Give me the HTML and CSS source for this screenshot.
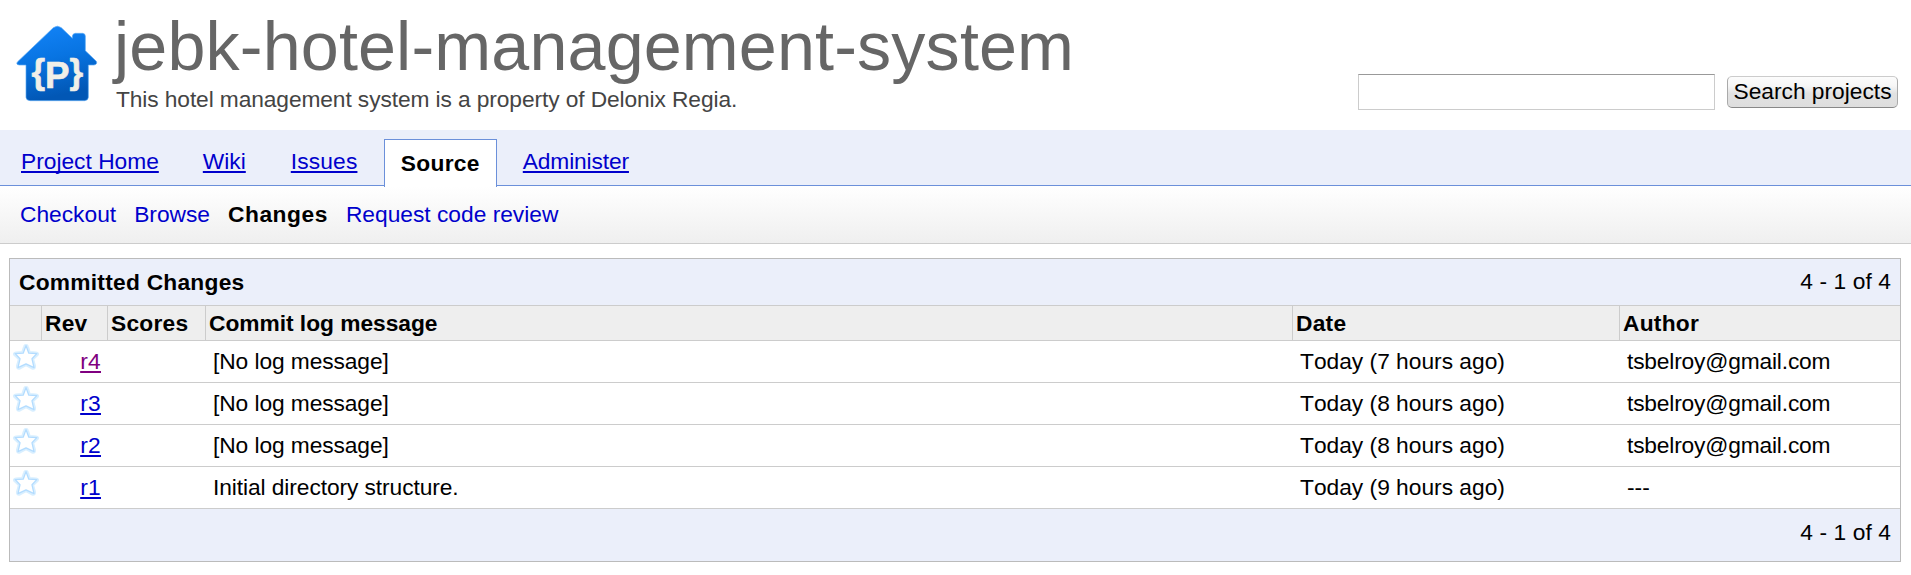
FILE: index.html
```html
<!DOCTYPE html>
<html lang="en">
<head>
<meta charset="utf-8">
<title>jebk-hotel-management-system</title>
<link rel="stylesheet" href="styles.css">
</head>
<body>
<svg class="defs" width="0" height="0" aria-hidden="true">
  <symbol id="star" viewBox="0 0 26 26">
    <path d="M13 1.3 Q14.4 1.2 14.8 2.8 L16.6 8.3 L22.8 8.6 Q26 9.2 24.2 11.2 L19.9 15 L21.8 21.8 Q22.2 25.4 19 24.3 L13 20.9 L7 24.3 Q3.8 25.4 4.2 21.8 L6.1 15 L1.8 11.2 Q0 9.2 3.2 8.6 L9.4 8.3 L11.2 2.8 Q11.6 1.2 13 1.3Z" fill="#fff" stroke="#d9efff" stroke-width="2.4" stroke-linejoin="round"/>
    <path d="M13 1.6 L15.8 9.2 L23.8 9.6 L19 14.8 L21 23.6 L13 19.8 L5 23.6 L7 14.8 L2.2 9.6 L10.2 9.2Z" fill="#fff" stroke="#b3dcff" stroke-width="1.3" stroke-linejoin="round"/>
  </symbol>
</svg>
<header class="header">
  <svg class="logo" viewBox="0 0 330 330" width="110" height="110">
    <defs>
      <linearGradient id="house" x1="0" y1="0" x2=".25" y2="1">
        <stop offset="0" stop-color="#1485fa"/>
        <stop offset=".5" stop-color="#0874e2"/>
        <stop offset="1" stop-color="#0257b5"/>
      </linearGradient>
    </defs>
    <path d="M160 53 Q172 44 184 53 L217 85 V78 Q218 71 226 70 H248 Q256 71 256 78 V122 L289 154 Q293 163 282 165 H265 V262 Q264 272 254 272 H90 Q79 272 78 262 V165 H58 Q46 163 53 155Z" fill="url(#house)" stroke="#5aa9f5" stroke-width="2"/>
    <text class="logo-text" text-anchor="middle" x="172" y="222">{<tspan class="logo-letter" dy="12">P</tspan><tspan dy="-12">}</tspan></text>
  </svg>
  <div class="heading">
    <h1 class="title">jebk-hotel-management-system</h1>
    <p class="summary">This hotel management system is a property of Delonix Regia.</p>
  </div>
  <form class="search">
    <input class="search-input" type="text" aria-label="Search">
    <button class="search-button" type="button">Search projects</button>
  </form>
</header>
<nav class="tabs">
  <a class="tab home" href="#">Project Home</a>
  <a class="tab wiki" href="#">Wiki</a>
  <a class="tab issues" href="#">Issues</a>
  <span class="tab active">Source</span>
  <a class="tab administer" href="#">Administer</a>
</nav>
<nav class="subnav">
  <a href="#">Checkout</a>
  <a href="#">Browse</a>
  <b>Changes</b>
  <a href="#">Request code review</a>
</nav>
<main class="list">
  <div class="list-head"><b>Committed Changes</b><span class="pages">4 - 1 of 4</span></div>
  <div class="row columns">
    <b></b><b>Rev</b><b>Scores</b><b class="message">Commit log message</b><b>Date</b><b>Author</b>
  </div>
  <div class="row"><svg class="star"><use href="#star"/></svg><span class="rev"><a class="visited" href="#">r4</a></span><span></span><span class="log">[No log message]</span><span>Today (7 hours ago)</span><span class="mail">tsbelroy@gmail.com</span></div>
  <div class="row"><svg class="star"><use href="#star"/></svg><span class="rev"><a href="#">r3</a></span><span></span><span class="log">[No log message]</span><span>Today (8 hours ago)</span><span class="mail">tsbelroy@gmail.com</span></div>
  <div class="row"><svg class="star"><use href="#star"/></svg><span class="rev"><a href="#">r2</a></span><span></span><span class="log">[No log message]</span><span>Today (8 hours ago)</span><span class="mail">tsbelroy@gmail.com</span></div>
  <div class="row"><svg class="star"><use href="#star"/></svg><span class="rev"><a href="#">r1</a></span><span></span><span class="log">Initial directory structure.</span><span>Today (9 hours ago)</span><span>---</span></div>
  <div class="list-foot"><span class="pages">4 - 1 of 4</span></div>
</main>
</body>
</html>
```
FILE: styles.css
```css
* { box-sizing: border-box; }
body {
  margin: 0;
  background: #fff;
  color: #000;
  font: 22.75px/28px "Liberation Sans", Arial, sans-serif;
  font-kerning: none;
  white-space: nowrap;
}
a {
  color: #0000cc;
  text-decoration: underline;
  text-decoration-thickness: 2px;
  text-underline-offset: 2px;
  text-decoration-skip-ink: none;
}
b { letter-spacing: .25px; }
.defs { display: block; height: 0; }

.header { display: flex; height: 130px; }
.logo { flex: none; margin-top: 10px; }
.logo-text {
  font: bold 105px "Liberation Sans", Arial, sans-serif;
  fill: #f1efe8;
  stroke: #f1efe8;
  stroke-width: 2px;
}
.logo-letter { font-size: 110px; }
.heading { flex: 1; padding: 8px 0 0 6px; }
.title {
  margin: 0 0 0 -2px;
  font-size: 68.25px;
  line-height: 77px;
  font-weight: normal;
  letter-spacing: .15px;
  color: #666;
}
.summary { margin: 0; color: #444; letter-spacing: -.1px; }
.search { display: flex; align-items: flex-start; margin: 74px 13px 0 0; }
.search-input {
  width: 357px;
  height: 36px;
  border: 1px solid #ccc;
  border-top-color: #999;
}
.search-button {
  width: 171px;
  height: 32px;
  margin: 2px 0 0 12px;
  padding: 0 0 2px;
  border: 1px solid;
  border-color: #ccc #aaa #888 #aaa;
  border-radius: 5px;
  background: linear-gradient(#fcfcfc 0, #f6f6f6 30%, #e2e2e2 55%, #dedede);
  color: #000;
  font: inherit;
  font-kerning: none;
}

.tabs {
  display: flex;
  height: 56px;
  padding: 9px 0 0 21px;
  background: #ebeffa;
  border-bottom: 1px solid #6b90da;
}
.tab { padding-top: 8px; }
.home { margin-right: 44px; }
.wiki { margin-right: 45px; }
.issues { width: 67px; letter-spacing: .15px; }
.administer { letter-spacing: -.13px; }
.active {
  width: 113px;
  height: 48px;
  margin: 0 26px;
  padding-top: 9px;
  border: 1px solid #6b90da;
  border-bottom: 0;
  background: #fff;
  font-weight: bold;
  letter-spacing: .3px;
  text-align: center;
}
.subnav {
  display: flex;
  gap: 18px;
  height: 58px;
  padding: 14px 0 0 20px;
  background: linear-gradient(#fff, #efefef);
  border-bottom: 1px solid #ccc;
}
.subnav a { text-decoration: none; }
.subnav b { letter-spacing: .55px; }

.list { margin: 14px 10px 0 9px; border: 1px solid #bbb; }
.list-head, .list-foot {
  display: flex;
  justify-content: space-between;
  height: 47px;
  padding: 9px 9px 0;
  background: #ebeffa;
  border-bottom: 1px solid #ccc;
}
.pages { letter-spacing: .1px; }
.list-head .pages { margin-top: -1px; }
.list-foot { height: 52px; justify-content: flex-end; border-bottom: 0; }
.row {
  display: grid;
  grid-template-columns: 32px 66px 98px 1087px 327px 1fr;
  height: 42px;
  border-bottom: 1px solid #ccc;
}
.row > span { padding: 6px 0 0 7px; }
.row > .rev { padding: 6px 7px 0 0; text-align: right; letter-spacing: .3px; }
.row > .log { letter-spacing: -.08px; }
.visited { color: #800080; }
.star { width: 26px; height: 26px; margin: 3px 0 0 3px; }
.row > .mail { letter-spacing: -.17px; }
.columns { height: 35px; background: #eee; }
.columns > b { padding: 3px 0 0 3px; border-right: 1px solid #ccc; }
.columns > .message { letter-spacing: -.02px; }
.columns > b:last-child { border-right: 0; }
```
